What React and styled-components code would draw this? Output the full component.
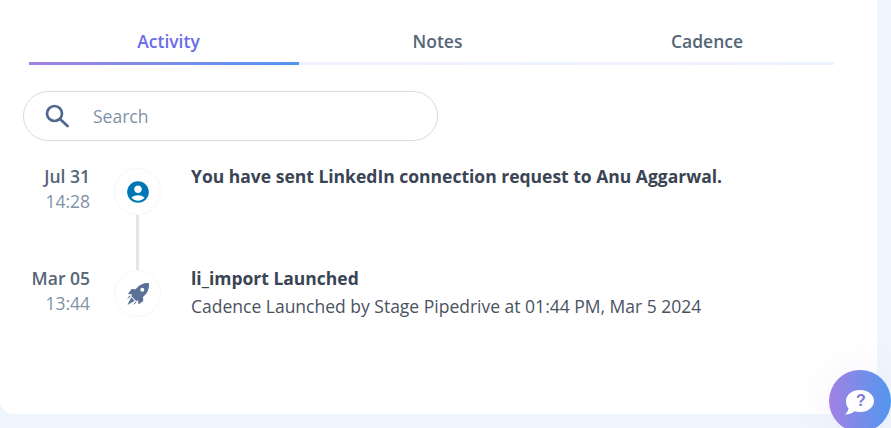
import React from "react";
import styled, { createGlobalStyle } from "styled-components";
import { MdAccountCircle } from "react-icons/md";

const GlobalStyle = createGlobalStyle`
  html, body {
    margin: 0;
    padding: 0;
    height: 100%;
    overflow: hidden;
    background: #f0f6fd;
    font-family: "Open Sans", "Liberation Sans", sans-serif;
  }
`;

const RocketIcon = () => (
  <svg width="24" height="24" viewBox="0 0 24 24" fill="#5b7296">
    <path d="M23 1c.4 5.500-1.200 9.800-5 13l-1 .9.300 4.100-4.800 3.500-.5-4.300-1.500 1.100-5.300-5.300 1.100-1.500-4.300-.5L5.500 7l4.100.3.900-1C13.600 2.500 17.700.6 23 1z" />
    <circle cx="16.300" cy="7.700" r="2" fill="#fff" />
    <path d="M5.200 15.300l3.500 3.500L1.500 23zM3.500 13.500l1 1L1 17.500zM9.500 19.500l1 1-3.500 2.500z" />
  </svg>
);

const SearchIcon = () => (
  <svg width="24" height="24" viewBox="0 0 24 24" fill="none" stroke="#4f6a8f" strokeWidth="2.700">
    <circle cx="9.500" cy="9.500" r="7.500" />
    <path d="M15 15l7.500 7" strokeLinecap="round" />
  </svg>
);

const events = [
  {
    date: "Jul 31",
    time: "14:28",
    icon: <MdAccountCircle size={26} color="#0077b5" />,
    title: "You have sent LinkedIn connection request to Anu Aggarwal.",
  },
  {
    date: "Mar 05",
    time: "13:44",
    icon: <RocketIcon />,
    title: "li_import Launched",
    detail: "Cadence Launched by Stage Pipedrive at 01:44 PM, Mar 5 2024",
  },
];

function App() {
  return (
    <Page>
      <GlobalStyle />
      <Panel>
        <Tabs>
          <Tab $active $inset={9}>Activity</Tab>
          <Tab $inset={2}>Notes</Tab>
          <Tab $inset={6}>Cadence</Tab>
        </Tabs>
        <SearchBox>
          <SearchIcon />
          <SearchInput placeholder="Search" />
        </SearchBox>
        <Timeline>
          {events.map((event, i) => (
            <Event key={event.date}>
              <When>
                <EventDate>{event.date}</EventDate>
                <EventTime>{event.time}</EventTime>
              </When>
              <Rail>
                <IconCircle>{event.icon}</IconCircle>
                {i < events.length - 1 && <RailLine />}
              </Rail>
              <Body>
                <Title>{event.title}</Title>
                {event.detail && <Detail>{event.detail}</Detail>}
              </Body>
            </Event>
          ))}
        </Timeline>
      </Panel>
      <HelpButton aria-label="Help">
        <svg width="30" height="25" viewBox="0 0 30 25">
          <path
            d="M16 0c8 0 14 4.800 14 11s-6 11-14 11c-1.900 0-3.700-.3-5.400-.8C8.600 23 5 24.500 1 24.500c1.800-1.500 3-3.300 3.500-6C2.900 16.500 2 14 2 11 2 4.800 8 0 16 0z"
            fill="#fff"
          />
        </svg>
        <HelpMark>?</HelpMark>
      </HelpButton>
    </Page>
  );
}

export default App;

const Page = styled.div`
  position: relative;
  width: 891px;
  height: 428px;
  overflow: hidden;
`;

const Panel = styled.div`
  width: 877px;
  height: 414px;
  box-sizing: border-box;
  padding-top: 24px;
  background: #fff;
  border-bottom-left-radius: 14px;
`;

const Tabs = styled.div`
  display: grid;
  grid-template-columns: 270px 275px 260px;
  width: 805px;
  margin-left: 29px;
`;

const Tab = styled.div`
  height: 41px;
  box-sizing: border-box;
  padding: 5px 0 0 ${(p) => p.$inset}px;
  text-align: center;
  font-size: 17.5px;
  line-height: 24px;
  font-weight: 600;
  color: ${(p) => (p.$active ? "#6a6be8" : "#567")};
  border-bottom: 3px solid transparent;
  border-image: ${(p) =>
      p.$active
        ? "linear-gradient(90deg, #a282e3, #5196ee)"
        : "linear-gradient(90deg, #f2f1fe, #ecf3fd)"}
    1;
`;

const SearchBox = styled.div`
  display: flex;
  align-items: center;
  width: 415px;
  height: 50px;
  box-sizing: border-box;
  margin: 26px 0 0 23px;
  padding-left: 21px;
  border: 1px solid #dadada;
  border-radius: 25px;
`;

const SearchInput = styled.input`
  flex: 1;
  min-width: 0;
  margin-left: 24px;
  border: none;
  outline: none;
  padding: 0;
  background: transparent;
  font-family: inherit;
  font-size: 17.5px;
  color: #334;

  &::placeholder {
    color: #8091a8;
    opacity: 1;
  }
`;

const Timeline = styled.div`
  margin-top: 27px;
`;

const Event = styled.div`
  display: flex;
  height: 102px;
`;

const When = styled.div`
  width: 90px;
  text-align: right;
  line-height: 25px;
  margin-top: -4px;
`;

const EventDate = styled.div`
  font-size: 17.5px;
  font-weight: 600;
  color: #567;
`;

const EventTime = styled.div`
  font-size: 17.5px;
  color: #8091a8;
`;

const Rail = styled.div`
  display: flex;
  flex-direction: column;
  align-items: center;
  width: 47px;
  margin-left: 24px;
`;

const IconCircle = styled.div`
  display: flex;
  flex: none;
  align-items: center;
  justify-content: center;
  width: 47px;
  height: 47px;
  box-sizing: border-box;
  border: 1px solid #f5f6f8;
  border-radius: 50%;
  background: #fff;
`;

const RailLine = styled.div`
  flex: 1;
  width: 3px;
  background: #e1e5ea;
`;

const Body = styled.div`
  margin-left: 30px;
  margin-top: -4px;
`;

const Title = styled.div`
  font-size: 17.5px;
  line-height: 25px;
  font-weight: 700;
  color: #3a4454;
`;

const Detail = styled.div`
  margin-top: 3px;
  font-size: 17.5px;
  line-height: 25px;
  color: #4a5262;
`;

const HelpButton = styled.button`
  position: absolute;
  left: 829px;
  top: 370px;
  width: 62px;
  height: 62px;
  padding: 2px 2px 0 0;
  border: none;
  border-radius: 50%;
  display: flex;
  align-items: center;
  justify-content: center;
  background: linear-gradient(90deg, #a282e3, #5196ee);
  box-shadow: 0 0 40px rgba(140, 130, 230, 0.1);
`;

const HelpMark = styled.span`
  position: absolute;
  left: 27px;
  top: 20px;
  font-size: 16px;
  line-height: 22px;
  font-weight: 800;
  color: #7a7bdc;
`;
